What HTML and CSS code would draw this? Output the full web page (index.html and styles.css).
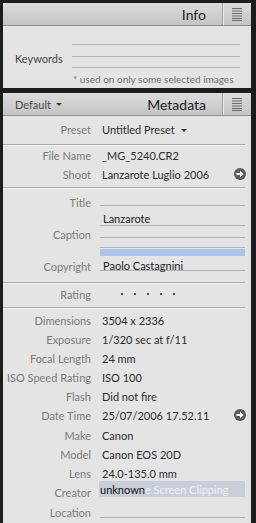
FILE: index.html
```html
<!DOCTYPE html>
<html lang="en">
<head>
    <meta charset="UTF-8">
    <title>Info / Metadata</title>
    <link rel="stylesheet" href="styles.css">
</head>
<body>
    <div class="frame">
        <!-- Info panel -->
        <section class="panel info">
            <header class="panel-head">
                <h2 class="panel-title">Info</h2>
                <span class="head-div"></span>
                <svg class="head-menu" width="10" height="13" viewBox="0 0 10 13">
                    <rect x="0" y="0" width="10" height="1" fill="#6a6a6a"/>
                    <rect x="0" y="2.5" width="10" height="1" fill="#6a6a6a"/>
                    <rect x="0" y="5" width="10" height="1" fill="#6a6a6a"/>
                    <rect x="0" y="7.5" width="10" height="1" fill="#6a6a6a"/>
                    <rect x="0" y="10" width="10" height="1" fill="#6a6a6a"/>
                    <rect x="0" y="12" width="10" height="1" fill="#6a6a6a"/>
                </svg>
            </header>
            <div class="info-body">
                <div class="kw-row">
                    <span class="kw-label">Keywords</span>
                    <div class="kw-lines">
                        <span class="kw-line l1"></span>
                        <span class="kw-line l2"></span>
                        <span class="kw-line l3"></span>
                    </div>
                </div>
                <p class="kw-note">* used on only some selected images</p>
            </div>
        </section>

        <!-- Metadata panel -->
        <section class="panel meta">
            <header class="panel-head">
                <span class="preset-pick">Default <i class="caret"></i></span>
                <h2 class="panel-title">Metadata</h2>
                <span class="head-div"></span>
                <svg class="head-menu" width="10" height="13" viewBox="0 0 10 13">
                    <rect x="0" y="0" width="10" height="1" fill="#6a6a6a"/>
                    <rect x="0" y="2.5" width="10" height="1" fill="#6a6a6a"/>
                    <rect x="0" y="5" width="10" height="1" fill="#6a6a6a"/>
                    <rect x="0" y="7.5" width="10" height="1" fill="#6a6a6a"/>
                    <rect x="0" y="10" width="10" height="1" fill="#6a6a6a"/>
                    <rect x="0" y="12" width="10" height="1" fill="#6a6a6a"/>
                </svg>
            </header>

            <div class="meta-body">
                <div class="sec sec-preset">
                    <div class="row tall">
                        <span class="lbl">Preset</span>
                        <span class="val">Untitled Preset <i class="caret"></i></span>
                    </div>
                </div>

                <div class="sec sec-file">
                    <div class="row">
                        <span class="lbl">File Name</span>
                        <span class="val">_MG_5240.CR2</span>
                    </div>
                    <div class="row">
                        <span class="lbl">Shoot</span>
                        <span class="val with-go">Lanzarote Luglio 2006
                            <svg class="go" width="12" height="12" viewBox="0 0 12 12"><circle cx="6" cy="6" r="6" fill="#5b5b5b"/><polygon points="2.5,5 6,5 6,2.8 9.6,6 6,9.2 6,7 2.5,7" fill="#fff"/></svg>
                        </span>
                    </div>
                </div>

                <div class="sec sec-fields">
                    <div class="frow f-title">
                        <span class="lbl">Title</span>
                        <span class="line title-line"></span>
                    </div>
                    <div class="frow f-caption">
                        <span class="lbl">Caption</span>
                        <div class="lines">
                            <span class="line c1">Lanzarote</span>
                            <span class="line c2"></span>
                            <span class="line c3"></span>
                            <span class="sel-bar"></span>
                        </div>
                    </div>
                    <div class="frow f-copy">
                        <span class="lbl">Copyright</span>
                        <span class="line copy-line">Paolo Castagnini</span>
                    </div>
                </div>

                <div class="sec sec-rating">
                    <div class="row tall">
                        <span class="lbl">Rating</span>
                        <span class="val stars"><i></i><i></i><i></i><i></i><i></i></span>
                    </div>
                </div>

                <div class="sec-exif">
                    <div class="row"><span class="lbl">Dimensions</span><span class="val">3504 x 2336</span></div>
                    <div class="row"><span class="lbl">Exposure</span><span class="val">1/320 sec at f/11</span></div>
                    <div class="row"><span class="lbl">Focal Length</span><span class="val">24 mm</span></div>
                    <div class="row"><span class="lbl">ISO Speed Rating</span><span class="val">ISO 100</span></div>
                    <div class="row"><span class="lbl">Flash</span><span class="val">Did not fire</span></div>
                    <div class="row">
                        <span class="lbl">Date Time</span>
                        <span class="val with-go">25/07/2006 17.52.11
                            <svg class="go" width="12" height="12" viewBox="0 0 12 12"><circle cx="6" cy="6" r="6" fill="#5b5b5b"/><polygon points="2.5,5 6,5 6,2.8 9.6,6 6,9.2 6,7 2.5,7" fill="#fff"/></svg>
                        </span>
                    </div>
                    <div class="row tall"><span class="lbl">Make</span><span class="val">Canon</span></div>
                    <div class="row"><span class="lbl">Model</span><span class="val">Canon EOS 20D</span></div>
                    <div class="row"><span class="lbl">Lens</span><span class="val">24.0-135.0 mm</span></div>
                    <div class="row tall top">
                        <span class="lbl">Creator</span>
                        <span class="clip"><span class="clip-val">unknown</span><span class="clip-text">e Screen Clipping</span></span>
                    </div>
                    <div class="row tall top">
                        <span class="lbl">Location</span>
                        <span class="line loc-line"></span>
                    </div>
                </div>
            </div>
        </section>
    </div>
</body>
</html>
```

FILE: styles.css
```css
* {
    margin: 0;
    padding: 0;
    box-sizing: border-box;
}

body {
    background: #1c1c1c;
    font-family: 'Lato', 'Open Sans', sans-serif;
    font-size: 11px;
    color: #2f2f2f;
}

.frame {
    display: flex;
    flex-direction: column;
    gap: 5px;
    height: 523px;
    padding: 3px 5px 0 3px;
    overflow: hidden;
}

.panel {
    background: #e4e4e4;
}

.meta {
    flex: 1;
}

/* panel headers */
.panel-head {
    display: flex;
    align-items: center;
    height: 23px;
    padding: 0 9px;
    background: linear-gradient(#dcdcdc, #c4c4c4);
    border-bottom: 1px solid #8c8c8c;
}

.panel-title {
    margin-left: auto;
    font-size: 14px;
    font-weight: 400;
    color: #1d1d1d;
}

.head-div {
    align-self: stretch;
    width: 2px;
    margin: 0 8px 0 16px;
    border-left: 1px solid #a2a2a2;
    border-right: 1px solid #e8e8e8;
}

.head-menu {
    display: block;
}

.preset-pick {
    display: flex;
    align-items: center;
    gap: 5px;
    padding-left: 3px;
    color: #4a4a4a;
}

.caret {
    display: inline-block;
    width: 0;
    height: 0;
    border-left: 3px solid transparent;
    border-right: 3px solid transparent;
    border-top: 3px solid #3a3a3a;
    vertical-align: middle;
    margin-left: 4px;
}

.preset-pick .caret {
    margin-left: 0;
}

/* info body */
.info-body {
    height: 62px;
    padding: 6px 11px 0 12px;
}

.kw-row {
    display: flex;
    gap: 10px;
}

.kw-label {
    width: 47px;
    align-self: flex-end;
    line-height: 18px;
    color: #444;
    white-space: nowrap;
}

.kw-lines {
    flex: 1;
}

.kw-line {
    display: block;
    border-bottom: 1px solid #b2b2b2;
}

.kw-line.l1 { height: 13px; }
.kw-line.l2 { height: 12px; }
.kw-line.l3 { height: 11px; }

.kw-note {
    margin-top: 4px;
    padding-left: 58px;
    line-height: 14px;
    font-size: 10px;
    color: #707070;
    white-space: nowrap;
}

/* metadata body */
.meta-body {
    padding-right: 6px;
}

.sec {
    border-bottom: 1px solid #a9a9a9;
    box-shadow: 0 1px 0 #f3f3f3;
}

.sec-preset { padding: 3px 0 5px; }
.sec-file { padding: 1px 0 3px; }
.sec-fields { padding: 7px 0 5px; }
.sec-rating { padding: 1px 0 3px; }
.sec-exif { padding-top: 3px; }

.row {
    display: grid;
    grid-template-columns: 88px 1fr;
    column-gap: 11px;
    align-items: center;
    height: 19px;
}

.row.tall {
    height: 20px;
}

.row.top {
    align-items: start;
}

.lbl {
    text-align: right;
    color: #7a7a7a;
    white-space: nowrap;
}

.row.top .lbl {
    line-height: 20px;
}

.val {
    color: #2c2c2c;
    white-space: nowrap;
}

.with-go {
    display: flex;
    align-items: center;
    justify-content: space-between;
    margin-right: -1px;
}

.go {
    display: block;
    margin-top: -2px;
}

/* text fields */
.frow {
    display: grid;
    grid-template-columns: 88px 1fr;
    column-gap: 9px;
    align-items: start;
}

.frow .lbl {
    line-height: 15px;
}

.line {
    display: block;
    border-bottom: 1px solid #b2b2b2;
    padding-left: 3px;
    color: #222;
    white-space: nowrap;
}

.title-line { height: 11px; }

.f-title { height: 15px; }

.f-caption .lbl {
    align-self: center;
    padding-top: 2px;
}

.c1 {
    height: 16px;
    padding-top: 2px;
    line-height: 13px;
}

.c2 { height: 12px; }
.c3 { height: 10px; }

.sel-bar {
    display: block;
    height: 7px;
    margin-top: 1px;
    background: #a9c5ea;
}

.f-copy {
    padding-top: 1px;
}

.f-copy .lbl {
    line-height: 20px;
}

.copy-line {
    height: 14px;
    padding-top: 2px;
    line-height: 14px;
}

.loc-line {
    height: 15px;
    margin-left: -2px;
}

/* rating */
.stars {
    display: flex;
    gap: 11px;
    padding-left: 19px;
}

.stars i {
    width: 2px;
    height: 2px;
    background: #505050;
}

/* screen clipping overlay on creator */
.clip {
    display: flex;
    height: 16px;
    margin: -2px 0 0 -3px;
    background: #c8cfda;
    line-height: 18px;
    white-space: nowrap;
    overflow: hidden;
}

.clip-val {
    color: #111;
    padding-left: 1px;
}

.clip-text {
    color: #eef2f7;
}
```
